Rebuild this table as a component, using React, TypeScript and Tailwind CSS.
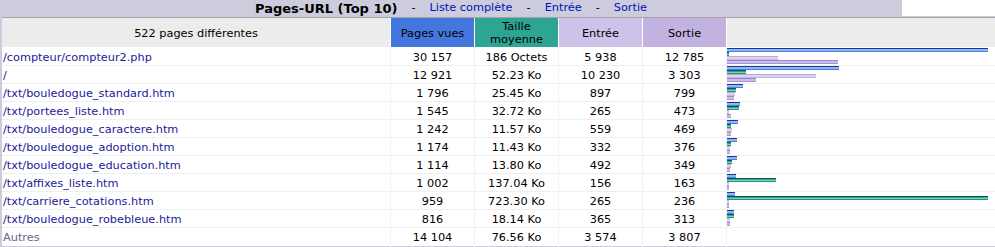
const rows = [
  { url: "/compteur/compteur2.php", pages: 30157, size: "186 Octets", bytes: 186, entry: 5938, exit: 12785 },
  { url: "/", pages: 12921, size: "52.23 Ko", bytes: 52.23 * 1024, entry: 10230, exit: 3303 },
  { url: "/txt/bouledogue_standard.htm", pages: 1796, size: "25.45 Ko", bytes: 25.45 * 1024, entry: 897, exit: 799 },
  { url: "/txt/portees_liste.htm", pages: 1545, size: "32.72 Ko", bytes: 32.72 * 1024, entry: 265, exit: 473 },
  { url: "/txt/bouledogue_caractere.htm", pages: 1242, size: "11.57 Ko", bytes: 11.57 * 1024, entry: 559, exit: 469 },
  { url: "/txt/bouledogue_adoption.htm", pages: 1174, size: "11.43 Ko", bytes: 11.43 * 1024, entry: 332, exit: 376 },
  { url: "/txt/bouledogue_education.htm", pages: 1114, size: "13.80 Ko", bytes: 13.8 * 1024, entry: 492, exit: 349 },
  { url: "/txt/affixes_liste.htm", pages: 1002, size: "137.04 Ko", bytes: 137.04 * 1024, entry: 156, exit: 163 },
  { url: "/txt/carriere_cotations.htm", pages: 959, size: "723.30 Ko", bytes: 723.3 * 1024, entry: 265, exit: 236 },
  { url: "/txt/bouledogue_robebleue.htm", pages: 816, size: "18.14 Ko", bytes: 18.14 * 1024, entry: 365, exit: 313 },
];

const MAX_W = 261;
const maxPages = 30157;
const maxBytes = 723.3 * 1024;

const fmt = (n: number) => n.toLocaleString("en-US").replace(/,/g, " ");
const w = (v: number, max: number) => Math.max(2, Math.round((v / max) * MAX_W));

const cols = "grid grid-cols-[389px_84px_84px_84px_84px_1fr]";
const num = "flex items-center justify-center pt-[2px] border-r border-[#f2f2f2]";

function Bar({ width, className }: { width: number; className: string }) {
  return <div className={`h-[4px] ${className}`} style={{ width }} />;
}

export default function App() {
  return (
    <div className="w-[995px] h-[247px] overflow-hidden bg-white font-['DejaVu_Sans','Liberation_Sans',sans-serif] text-[11.3px] text-black">
      <div className="flex h-[16px]">
        <div className="w-[902px] bg-[#ccccdd] flex items-center justify-center gap-[14px] leading-none">
          <span className="text-[13px] font-bold">Pages-URL (Top 10)</span>
          <span>-</span>
          <span className="text-[#0011bb]">Liste complète</span>
          <span>-</span>
          <span className="text-[#0011bb]">Entrée</span>
          <span>-</span>
          <span className="text-[#0011bb]">Sortie</span>
        </div>
        <div className="flex-1 bg-white" />
      </div>
      <div className="bg-[#ccccdd] pt-px pl-[2px] pb-px">
        <div className="border-t border-[#a4a4ae]">
          <div className={`${cols} h-[29px] bg-[#ececec] leading-[13px]`}>
            <div className="flex items-center justify-center pt-px border-r border-white">522 pages différentes</div>
            <div className="flex items-center justify-center pt-px border-r border-white bg-[#4477dd]">Pages vues</div>
            <div className="flex items-center justify-center pt-px border-r border-white bg-[#2ea495] text-center">
              Taille
              <br />
              moyenne
            </div>
            <div className="flex items-center justify-center pt-px border-r border-white bg-[#cec2e8]">Entrée</div>
            <div className="flex items-center justify-center pt-px border-r border-white bg-[#c1b2e0]">Sortie</div>
            <div className="bg-[#ececec]" />
          </div>
          <div className="bg-white pt-px">
            {rows.map((r) => (
              <div key={r.url} className={`${cols} h-[18px] border-b border-[#efefef]`}>
                <div className="flex items-center pl-px pt-[2px] border-r border-[#f2f2f2] text-[#1a1a99]">{r.url}</div>
                <div className={num}>{fmt(r.pages)}</div>
                <div className={num}>{r.size}</div>
                <div className={num}>{fmt(r.entry)}</div>
                <div className={num}>{fmt(r.exit)}</div>
                <div className="flex flex-col">
                  <Bar
                    width={w(r.pages, maxPages)}
                    className="bg-[linear-gradient(to_bottom,#1d3a8e_0,#1d3a8e_1px,#8db6f6_1px,#8db6f6_3px,#4c7fe0_3px)]"
                  />
                  <Bar
                    width={w(r.bytes, maxBytes)}
                    className="bg-[linear-gradient(to_bottom,#0c5848_0,#0c5848_1px,#2ea495_1px,#2ea495_2px,#7ad6c4_2px,#7ad6c4_3px,#269080_3px)]"
                  />
                  <Bar
                    width={w(r.entry, maxPages)}
                    className="bg-[linear-gradient(to_bottom,#b9aed2_0,#b9aed2_1px,#dcd2f2_1px,#dcd2f2_3px,#c4b8e2_3px)]"
                  />
                  <Bar
                    width={w(r.exit, maxPages)}
                    className="bg-[linear-gradient(to_bottom,#9a86c8_0,#9a86c8_1px,#cbbbee_1px,#cbbbee_3px,#a894d8_3px)]"
                  />
                </div>
              </div>
            ))}
            <div className={`${cols} h-[18px]`}>
              <div className="flex items-center pl-px pt-[2px] border-r border-[#f2f2f2] text-[#666688]">Autres</div>
              <div className={num}>14 104</div>
              <div className={num}>76.56 Ko</div>
              <div className={num}>3 574</div>
              <div className={num}>3 807</div>
              <div />
            </div>
          </div>
        </div>
      </div>
    </div>
  );
}
